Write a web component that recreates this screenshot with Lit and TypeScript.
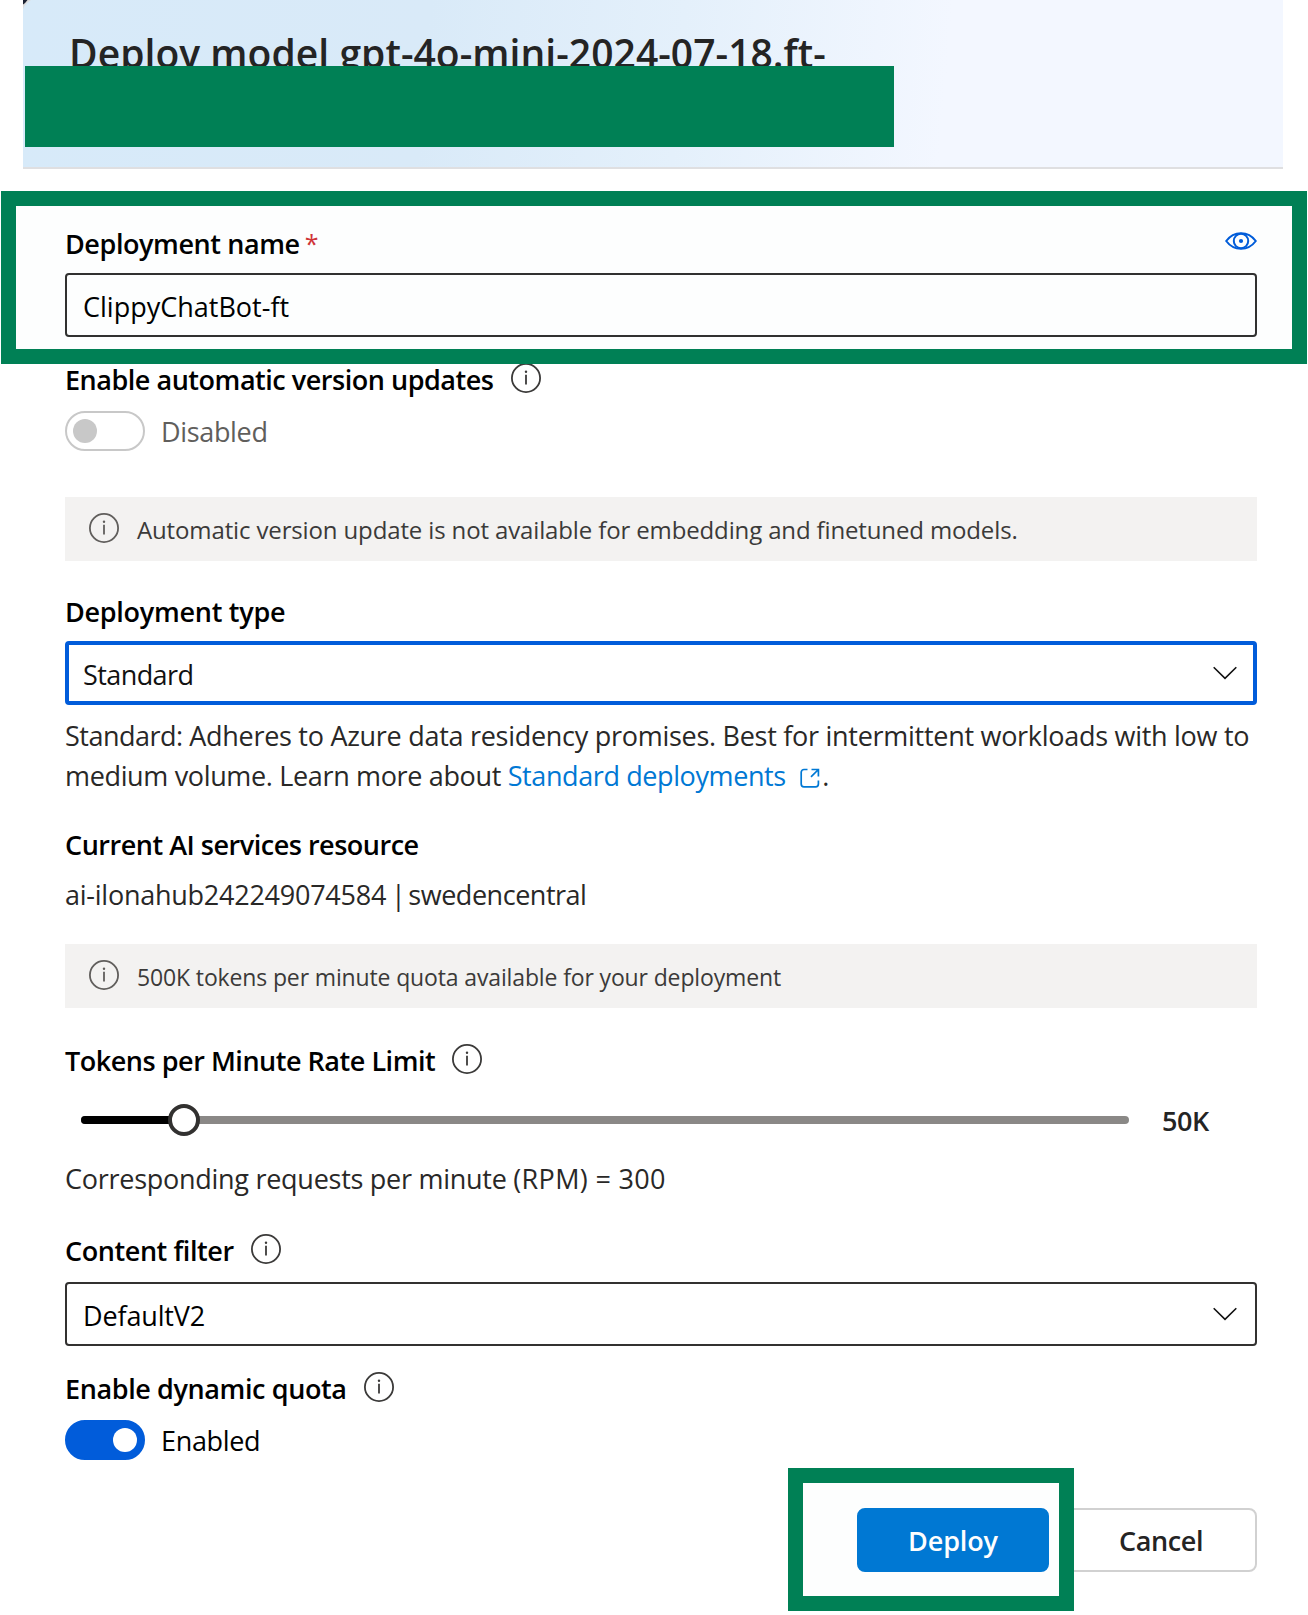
import { LitElement, html, css, svg } from "lit";
import { customElement, property, state } from "lit/decorators.js";
import { classMap } from "lit/directives/class-map.js";

const base = css`
  :host {
    display: block;
    box-sizing: border-box;
    font-family: "Open Sans", "Noto Sans", sans-serif;
    font-size: 27px;
    line-height: 40px;
  }
  *,
  *::before {
    box-sizing: border-box;
  }
  svg {
    display: block;
    flex: none;
  }
`;

const infoIcon = svg`
  <svg width="30" height="30" viewBox="0 0 30 30" fill="none" stroke="currentColor">
    <circle cx="15" cy="15" r="14.1" stroke-width="1.8"></circle>
    <path d="M15 11.8V21.6" stroke-width="1.8"></path>
    <circle cx="15" cy="8.8" r="1.2" fill="currentColor" stroke="none"></circle>
  </svg>`;

const chevronIcon = svg`
  <svg width="24" height="14" viewBox="0 0 24 14" fill="none" stroke="#111" stroke-width="1.6">
    <path d="M.7 1.2L12 12.4L23.3 1.2"></path>
  </svg>`;

const eyeIcon = svg`
  <svg width="32" height="18" viewBox="0 0 32 18" fill="none" stroke="#015cda" stroke-width="2">
    <path d="M1.2 9C4.6 4.4 10 1.2 16 1.2S27.4 4.4 30.8 9C27.4 13.6 22 16.8 16 16.8S4.6 13.6 1.2 9Z"></path>
    <circle cx="16" cy="9" r="7.2"></circle>
    <circle cx="16" cy="9" r="2.1" fill="#015cda" stroke="none"></circle>
  </svg>`;

@customElement("field-label")
class FieldLabel extends LitElement {
  @property({ type: Boolean }) info = false;
  static styles = [
    base,
    css`
      :host {
        font-weight: 600;
        color: #000;
        height: 40px;
        white-space: nowrap;
      }
      .row {
        display: flex;
        align-items: flex-start;
        gap: 17px;
      }
      .info {
        color: #3b3a39;
        padding-top: 3px;
      }
    `,
  ];
  render() {
    return html`<div class="row">
      <span><slot></slot></span>
      ${this.info ? html`<span class="info">${infoIcon}</span>` : null}
    </div>`;
  }
}

@customElement("note-bar")
class NoteBar extends LitElement {
  static styles = [
    base,
    css`
      .bar {
        display: flex;
        align-items: center;
        gap: 18px;
        height: 64px;
        padding-left: 24px;
        background: #f3f2f1;
        color: #3b3a39;
        white-space: nowrap;
      }
      .icon {
        color: #605e5c;
        padding-bottom: 2px;
      }
      .text {
        padding-top: 2px;
      }
    `,
  ];
  render() {
    return html`<div class="bar"><span class="icon">${infoIcon}</span><span class="text"><slot></slot></span></div>`;
  }
}

@customElement("box-field")
class BoxField extends LitElement {
  @property() value = "";
  @property({ type: Boolean }) dropdown = false;
  @property({ type: Boolean }) focused = false;
  static styles = [
    base,
    css`
      .box {
        display: flex;
        align-items: center;
        justify-content: space-between;
        height: 64px;
        padding: 0 18px 0 16px;
        border: 2px solid #323130;
        border-radius: 4px;
        color: #000;
      }
      .focused {
        border: 4px solid #015cda;
        padding: 0 16px 0 14px;
        color: #111;
      }
      .value {
        padding-top: 4px;
      }
      .chevron {
        padding-bottom: 1px;
      }
    `,
  ];
  render() {
    return html`<div class=${classMap({ box: true, focused: this.focused })}>
      <span class="value">${this.value}</span>
      ${this.dropdown ? html`<span class="chevron">${chevronIcon}</span>` : null}
    </div>`;
  }
}

@customElement("toggle-switch")
class ToggleSwitch extends LitElement {
  @property({ type: Boolean }) on = false;
  static styles = [
    base,
    css`
      .row {
        display: flex;
        height: 40px;
        gap: 16px;
        color: #605e5c;
      }
      .track {
        display: flex;
        align-items: center;
        width: 80px;
        height: 40px;
        padding: 0 6px;
        border: 2px solid #c8c8c8;
        border-radius: 20px;
        background: #fff;
      }
      .knob {
        width: 24px;
        height: 24px;
        border-radius: 50%;
        background: #c8c8c8;
      }
      .text {
        padding-top: 1px;
      }
      .on {
        color: #000;
      }
      .on .track {
        justify-content: flex-end;
        border-color: #015cda;
        background: #015cda;
      }
      .on .knob {
        background: #fff;
      }
    `,
  ];
  render() {
    return html`<div class=${classMap({ row: true, on: this.on })}>
      <div class="track"><div class="knob"></div></div>
      <span class="text">${this.on ? "Enabled" : "Disabled"}</span>
    </div>`;
  }
}

@customElement("rate-slider")
class RateSlider extends LitElement {
  @property({ type: Number }) value = 0;
  @property({ type: Number }) max = 100;
  static styles = [
    base,
    css`
      .row {
        display: flex;
        align-items: center;
        height: 40px;
        padding-left: 16px;
        gap: 32px;
      }
      .track {
        display: flex;
        align-items: center;
        width: 1048px;
        height: 8px;
        border-radius: 4px;
        background: #8a8886;
      }
      .fill {
        height: 8px;
        border-radius: 4px 0 0 4px;
        background: #000;
      }
      .thumb {
        flex: none;
        width: 32px;
        height: 32px;
        margin-left: -16px;
        border: 4px solid #323130;
        border-radius: 50%;
        background: #fff;
      }
      .amount {
        padding: 1px 0 0 1px;
        font-weight: 600;
        color: #242424;
        letter-spacing: -0.5px;
      }
    `,
  ];
  render() {
    const width = `width:${(this.value / this.max) * 100}%`;
    return html`<div class="row">
      <div class="track"><div class="fill" style=${width}></div><div class="thumb"></div></div>
      <span class="amount">50K</span>
    </div>`;
  }
}

@customElement("app-root")
class AppRoot extends LitElement {
  @state() private deploymentName = "ClippyChatBot-ft";
  static styles = [
    base,
    css`
      :host {
        position: relative;
        height: 1615px;
        overflow: hidden;
        background: #fff;
        color: #292827;
      }
      .header {
        position: relative;
        height: 169px;
        margin: 0 25px 0 23px;
        padding: 25px 0 0 46px;
        border-bottom: 2px solid #dfdfe1;
        background: linear-gradient(95deg, #d7eaf9 0%, #d9eaf8 32%, #e4f0fb 52%, #f3f7ff 73%, #f3f7ff 100%);
      }
      .corner {
        position: absolute;
        left: 0;
        top: 0;
      }
      .title {
        margin: 0;
        font-size: 39px;
        line-height: 56px;
        font-weight: 600;
        color: #242424;
        letter-spacing: 0.05px;
        white-space: nowrap;
      }
      .cover {
        position: absolute;
        left: 2px;
        top: 66px;
        width: 869px;
        height: 81px;
        background: #008055;
      }
      .mark {
        position: absolute;
        border: 15px solid #008055;
        background: rgba(0, 128, 85, 0.008);
      }
      .mark-name {
        left: 1px;
        top: 191px;
        width: 1306px;
        height: 173px;
      }
      .mark-deploy {
        left: 788px;
        top: 1468px;
        width: 286px;
        height: 143px;
      }
      .form {
        padding: 55px 51px 0 65px;
      }
      .name-row {
        display: flex;
        justify-content: space-between;
        margin-bottom: 9px;
      }
      .eye {
        padding-top: 8px;
      }
      .required {
        color: #d13438;
        font-weight: 400;
        font-size: 25px;
        line-height: 30px;
        margin-left: 5px;
        vertical-align: 1px;
      }
      .auto-label {
        margin: 23px 0 11px;
        letter-spacing: -0.47px;
      }
      .auto-note {
        margin: 46px 0 31px;
        font-size: 24px;
        letter-spacing: -0.135px;
      }
      .type-label {
        margin-bottom: 9px;
        letter-spacing: -0.265px;
      }
      .about {
        margin: 11px 0 0;
        white-space: nowrap;
        letter-spacing: -0.28px;
      }
      .about-lead {
        letter-spacing: -0.5px;
      }
      .about-more {
        letter-spacing: -0.345px;
      }
      .link {
        color: #0078d4;
        letter-spacing: -0.4px;
        text-decoration: none;
      }
      .open {
        display: inline-block;
        margin: 0 2px 0 8px;
        vertical-align: -2px;
      }
      .resource-label {
        margin: 29px 0 10px;
        letter-spacing: -0.48px;
      }
      .resource {
        margin: 0;
        letter-spacing: -0.479px;
      }
      .resource-id {
        letter-spacing: -0.25px;
      }
      .divider {
        letter-spacing: -2.2px;
      }
      .quota-note {
        margin: 29px 0 33px;
        font-size: 23px;
        letter-spacing: -0.138px;
      }
      .rate-label {
        margin-bottom: 19px;
        letter-spacing: -0.47px;
      }
      .rpm {
        margin: 19px 0 32px;
        letter-spacing: -0.27px;
      }
      .rpm-value {
        letter-spacing: 0.32px;
      }
      .filter-label {
        margin-bottom: 11px;
        letter-spacing: -0.42px;
      }
      .dynamic-label {
        margin: 23px 0 11px;
        letter-spacing: -0.39px;
      }
      .tight {
        letter-spacing: -0.578px;
      }
      .filter-box {
        letter-spacing: -0.15px;
      }
      .snug {
        letter-spacing: -0.34px;
      }
      .name-label {
        letter-spacing: -0.418px;
      }
      .actions {
        display: flex;
        justify-content: flex-end;
        gap: 16px;
        margin-top: 48px;
      }
      .button {
        width: 192px;
        height: 64px;
        padding: 1px 0 0;
        border: 2px solid #d1d1d1;
        border-radius: 8px;
        background: #fff;
        color: #242424;
        font: 600 27px/40px "Open Sans", "Noto Sans", sans-serif;
        letter-spacing: -0.4px;
      }
      .primary {
        border-color: #0078d4;
        background: #0078d4;
        color: #fff;
        letter-spacing: -0.132px;
      }
    `,
  ];
  render() {
    return html`
      <div class="header">
        <svg class="corner" width="8" height="9" viewBox="0 0 8 9">
          <path d="M0 0H8Q2.5 3 0 9Z" fill="#dcdcdc"></path>
          <path d="M0 0H4.500Q2.500 3 0 4.500Z" fill="#1b2233"></path>
        </svg>
        <h1 class="title">Deploy model gpt-4o-mini-2024-07-18.ft-</h1>
        <div class="cover"></div>
      </div>
      <div class="form">
        <div class="name-row">
          <field-label class="name-label">Deployment name<span class="required">*</span></field-label>
          <span class="eye">${eyeIcon}</span>
        </div>
        <box-field .value=${this.deploymentName}></box-field>
        <field-label class="auto-label" info>Enable automatic version updates</field-label>
        <toggle-switch class="snug"></toggle-switch>
        <note-bar class="auto-note">Automatic version update is not available for embedding and finetuned models.</note-bar>
        <field-label class="type-label">Deployment type</field-label>
        <box-field class="tight" value="Standard" dropdown focused></box-field>
        <p class="about">
          <span class="about-lead">Standard: </span>Adheres to Azure data residency promises. Best for intermittent workloads with low to<br />
          <span class="about-more">medium volume. Learn more about </span><a class="link">Standard deployments
          <svg class="open" width="20" height="20" viewBox="0 0 20 20" fill="none" stroke="#0078d4" stroke-width="1.7">
            <path d="M7.5 1.500H4A2.800 2.800 0 0 0 1.200 4.300V16A2.800 2.800 0 0 0 4 18.800H15.600A2.800 2.800 0 0 0 18.400 16V12.500M11.500 1.500H18.400V8.500M18.400 1.500L11 8.900"></path></svg></a>.
        </p>
        <field-label class="resource-label">Current AI services resource</field-label>
        <p class="resource"><span class="resource-id">ai-ilonahub242249074584</span><span class="divider"> | </span>swedencentral</p>
        <note-bar class="quota-note">500K tokens per minute quota available for your deployment</note-bar>
        <field-label class="rate-label" info>Tokens per Minute Rate Limit</field-label>
        <rate-slider .value=${49} .max=${500}></rate-slider>
        <p class="rpm">Corresponding requests per minute <span class="rpm-value">(RPM) = 300</span></p>
        <field-label class="filter-label" info>Content filter</field-label>
        <box-field class="filter-box" value="DefaultV2" dropdown></box-field>
        <field-label class="dynamic-label" info>Enable dynamic quota</field-label>
        <toggle-switch class="snug" on></toggle-switch>
        <div class="actions">
          <button class="button primary">Deploy</button>
          <button class="button">Cancel</button>
        </div>
      </div>
      <div class="mark mark-name"></div>
      <div class="mark mark-deploy"></div>
    `;
  }
}
